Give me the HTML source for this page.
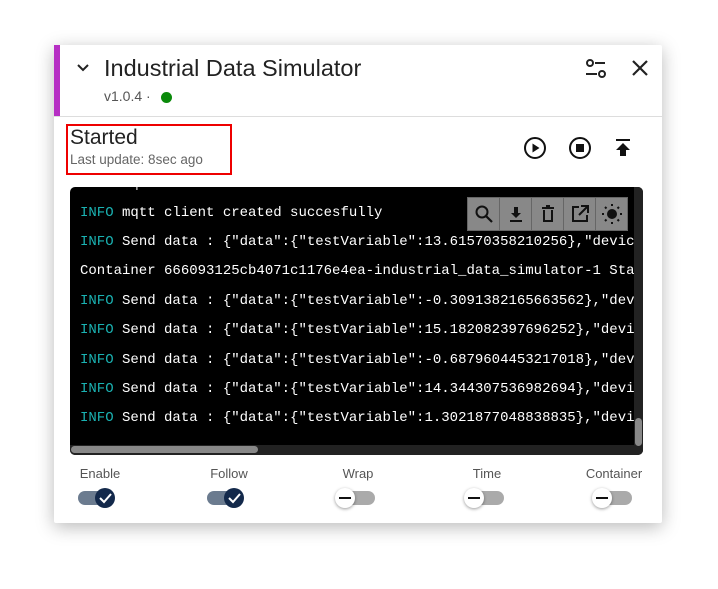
<!DOCTYPE html>
<html><head><style>
body{margin:0;width:718px;height:589px;background:#fff;font-family:"Liberation Sans",sans-serif;position:relative;overflow:hidden}
.card{position:absolute;left:54px;top:45px;width:608px;height:478px;background:#fff;box-shadow:0 4px 18px rgba(0,0,0,.28);border-radius:2px}
.bar{position:absolute;left:0;top:0;width:6px;height:71px;background:#b62fc4}
.a{position:absolute}
.term{position:absolute;left:16px;top:142px;width:573px;height:268px;background:#000;border-radius:5px;overflow:hidden;font-family:"Liberation Mono",monospace;font-size:14px;color:#fff}
.ln{position:absolute;left:10px;white-space:pre}
.i{color:#1ab2b2}
.tb{position:absolute;left:397px;top:10px;height:32px;display:flex;background:#888;border:1px solid #666}
.tb div{width:31px;height:32px;border-right:1px solid #666;display:flex;align-items:center;justify-content:center}
.lbl{position:absolute;top:421px;font-size:13px;color:#555;transform:translateX(-50%)}
.tr{position:absolute;top:446px;width:34px;height:14px;border-radius:7px}
.kn{position:absolute;top:443px;width:20px;height:20px;border-radius:50%}
</style></head><body>
<div class="card">
<div class="bar"></div>
<svg class="a" style="left:22px;top:16px" width="14" height="14" viewBox="0 0 14 14"><path d="M2 4l5 5 5-5" stroke="#222" stroke-width="2" fill="none"/></svg>
<div class="a" style="left:50px;top:10px;font-size:23.5px;color:#222">Industrial Data Simulator</div>
<div class="a" style="left:50px;top:43px;font-size:14px;color:#555">v1.0.4 ·</div>
<div class="a" style="left:107px;top:47px;width:11px;height:11px;border-radius:50%;background:#0a8a0a"></div>
<svg class="a" style="left:531px;top:13px" width="22" height="22" viewBox="0 0 22 22"><circle cx="5" cy="5" r="3" stroke="#222" stroke-width="2" fill="none"/><path d="M10 5h10M1 16h11" stroke="#222" stroke-width="2"/><circle cx="17" cy="16" r="3" stroke="#222" stroke-width="2" fill="none"/></svg>
<svg class="a" style="left:577px;top:14px" width="18" height="18" viewBox="0 0 18 18"><path d="M2 2l14 14M16 2L2 16" stroke="#222" stroke-width="2.2"/></svg>
<div class="a" style="left:0;top:71px;width:608px;height:1px;background:#ddd"></div>
<div class="a" style="left:12px;top:79px;width:166px;height:51px;border:2px solid #e00;box-sizing:border-box"></div>
<div class="a" style="left:16px;top:81px;font-size:21px;color:#222">Started</div>
<div class="a" style="left:16px;top:107px;font-size:13.5px;color:#666">Last update: 8sec ago</div>
<svg class="a" style="left:469px;top:91px" width="24" height="24" viewBox="0 0 24 24"><circle cx="12" cy="12" r="10" stroke="#111" stroke-width="2" fill="none"/><path d="M9.5 7.5v9l7-4.5z" fill="#111"/></svg>
<svg class="a" style="left:514px;top:91px" width="24" height="24" viewBox="0 0 24 24"><circle cx="12" cy="12" r="10" stroke="#111" stroke-width="2" fill="none"/><rect x="8" y="8" width="8" height="8" fill="#111"/></svg>
<svg class="a" style="left:559px;top:93px" width="20" height="20" viewBox="0 0 20 20"><path d="M3 2h14" stroke="#111" stroke-width="2"/><path d="M10 5l-7 7h4v6h6v-6h4z" fill="#111"/></svg>
<div class="term">
<div class="ln" style="top:-11px;color:#ccc">INFO mqtt connection established</div>
<div class="ln" style="top:18px"><span class="i">INFO</span> mqtt client created succesfully</div>
<div class="ln" style="top:47px"><span class="i">INFO</span> Send data : {"data":{"testVariable":13.61570358210256},"device</div>
<div class="ln" style="top:76px">Container 666093125cb4071c1176e4ea-industrial_data_simulator-1 Started</div>
<div class="ln" style="top:106px"><span class="i">INFO</span> Send data : {"data":{"testVariable":-0.3091382165663562},"device</div>
<div class="ln" style="top:135px"><span class="i">INFO</span> Send data : {"data":{"testVariable":15.182082397696252},"device</div>
<div class="ln" style="top:165px"><span class="i">INFO</span> Send data : {"data":{"testVariable":-0.6879604453217018},"device</div>
<div class="ln" style="top:194px"><span class="i">INFO</span> Send data : {"data":{"testVariable":14.344307536982694},"device</div>
<div class="ln" style="top:223px"><span class="i">INFO</span> Send data : {"data":{"testVariable":1.3021877048838835},"device</div>
<div class="a" style="left:564px;top:0;width:9px;height:268px;background:#222"></div>
<div class="a" style="left:565px;top:231px;width:7px;height:28px;background:#888;border-radius:4px"></div>
<div class="a" style="left:0;top:258px;width:564px;height:10px;background:#222"></div>
<div class="a" style="left:1px;top:259px;width:187px;height:7px;background:#888;border-radius:4px"></div>
<div class="tb">
<div><svg width="20" height="20" viewBox="0 0 20 20"><circle cx="8" cy="8" r="5.5" stroke="#111" stroke-width="2" fill="none"/><path d="M12 12l6 6" stroke="#111" stroke-width="2.2"/></svg></div>
<div><svg width="20" height="20" viewBox="0 0 20 20"><path d="M8 3h4v6h3l-5 5-5-5h3z" fill="#111"/><path d="M4 17h12" stroke="#111" stroke-width="2"/></svg></div>
<div><svg width="20" height="20" viewBox="0 0 20 20"><path d="M4 4h12M8 2h4" stroke="#111" stroke-width="2"/><path d="M6 6v11h8V6" stroke="#111" stroke-width="2" fill="none"/></svg></div>
<div><svg width="20" height="20" viewBox="0 0 20 20"><path d="M9 3H3v14h14v-6" stroke="#111" stroke-width="2" fill="none"/><path d="M11 2h7v7M18 2l-9 9" stroke="#111" stroke-width="2" fill="none"/></svg></div>
<div style="border-right:0"><svg width="22" height="22" viewBox="0 0 22 22"><circle cx="11" cy="11" r="5" fill="#111"/><g stroke="#111" stroke-width="2"><path d="M11 1v2M11 19v2M1 11h2M19 11h2M4 4l1.5 1.5M16.5 16.5L18 18M4 18l1.5-1.5M16.5 5.5L18 4"/></g></svg></div>
</div>
</div>
<div class="lbl" style="left:46px">Enable</div>
<div class="lbl" style="left:175px">Follow</div>
<div class="lbl" style="left:304px">Wrap</div>
<div class="lbl" style="left:433px">Time</div>
<div class="lbl" style="left:560px">Container</div>
<div class="tr" style="left:24px;background:#6b7b8f"></div><div class="kn" style="left:41px;background:#13294b"><svg width="20" height="20"><path d="M5 10l4 4 7-8" stroke="#fff" stroke-width="2" fill="none"/></svg></div>
<div class="tr" style="left:153px;background:#6b7b8f"></div><div class="kn" style="left:170px;background:#13294b"><svg width="20" height="20"><path d="M5 10l4 4 7-8" stroke="#fff" stroke-width="2" fill="none"/></svg></div>
<div class="tr" style="left:287px;background:#aaa"></div><div class="kn" style="left:281px;background:#fff;box-shadow:0 1px 3px rgba(0,0,0,.4)"><svg width="20" height="20"><path d="M4 10h12" stroke="#111" stroke-width="2"/></svg></div>
<div class="tr" style="left:416px;background:#aaa"></div><div class="kn" style="left:410px;background:#fff;box-shadow:0 1px 3px rgba(0,0,0,.4)"><svg width="20" height="20"><path d="M4 10h12" stroke="#111" stroke-width="2"/></svg></div>
<div class="tr" style="left:544px;background:#aaa"></div><div class="kn" style="left:538px;background:#fff;box-shadow:0 1px 3px rgba(0,0,0,.4)"><svg width="20" height="20"><path d="M4 10h12" stroke="#111" stroke-width="2"/></svg></div>
</div>
</body></html>
